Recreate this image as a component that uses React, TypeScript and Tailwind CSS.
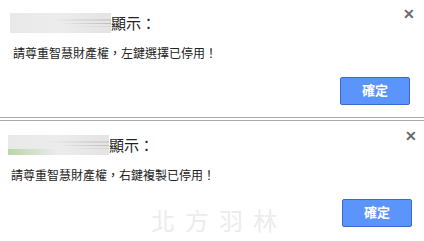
const font = { fontFamily: '"Liberation Sans", "Noto Sans CJK TC", sans-serif' };

type DialogProps = {
  message: string;
  tint?: boolean;
  className: string;
  watermark?: boolean;
};

// stand-in for the blurred-out site name
const Blurred = ({ tint }: { tint?: boolean }) => (
  <div className="flex h-[20px] w-[101px] flex-col items-end bg-gradient-to-r from-[#e9e9e9] via-[#ececec] to-[#e4e4e4]">
    <div className="mt-[6px] h-[2px] w-[61px] bg-gradient-to-r from-transparent to-[#cfcfcf]" />
    <div className="mt-[2px] h-[1px] w-[51px] bg-gradient-to-r from-transparent to-[#bdbdbd]" />
    <div className="mt-[2px] h-[2px] w-[41px] bg-gradient-to-r from-transparent to-[#d6d6d6]" />
    <div className="mt-auto h-[7px] w-full">
      {tint && <div className="h-full w-[50px] bg-gradient-to-r from-[#b8d8a8] to-transparent" />}
    </div>
  </div>
);

const Dialog = ({ message, tint, className, watermark }: DialogProps) => (
  <div className={`flex flex-col bg-white ${className}`} style={font}>
    <div className="flex items-start justify-between">
      <div className="flex items-center">
        <Blurred tint={tint} />
        <span className="text-[15px] leading-none text-[#222]">顯示：</span>
      </div>
      <span className="-mr-[5px] -mt-[6px] text-[14px] font-bold leading-none text-[#6a6a6a]">✕</span>
    </div>
    <p className="mt-[15px] pl-[3px] text-[12px] leading-none text-[#222]">{message}</p>
    <div className="mt-[17px] flex items-start justify-between">
      <div className="ml-[143px] mt-[11px] text-[24px] leading-none tracking-[10px] text-[#ececec]">
        {watermark ? '北方羽林' : ''}
      </div>
      <button className="h-[28px] w-[70px] rounded-[2px] border border-[#3a6bc9] bg-[#5b94fa] text-[13px] font-bold text-white">
        確定
      </button>
    </div>
  </div>
);

export default function App() {
  return (
    <div className="flex h-[241px] w-[424px] flex-col bg-white">
      <Dialog
        message="請尊重智慧財產權，左鍵選擇已停用！"
        className="h-[118px] border-b border-[#a8a8a8] pl-[10px] pr-[14px] pt-[13px]"
      />
      <Dialog
        message="請尊重智慧財產權，右鍵複製已停用！"
        tint
        watermark
        className="mt-[2px] flex-1 border-t border-[#a8a8a8] pl-[8px] pr-[12px] pt-[14px]"
      />
    </div>
  );
}
